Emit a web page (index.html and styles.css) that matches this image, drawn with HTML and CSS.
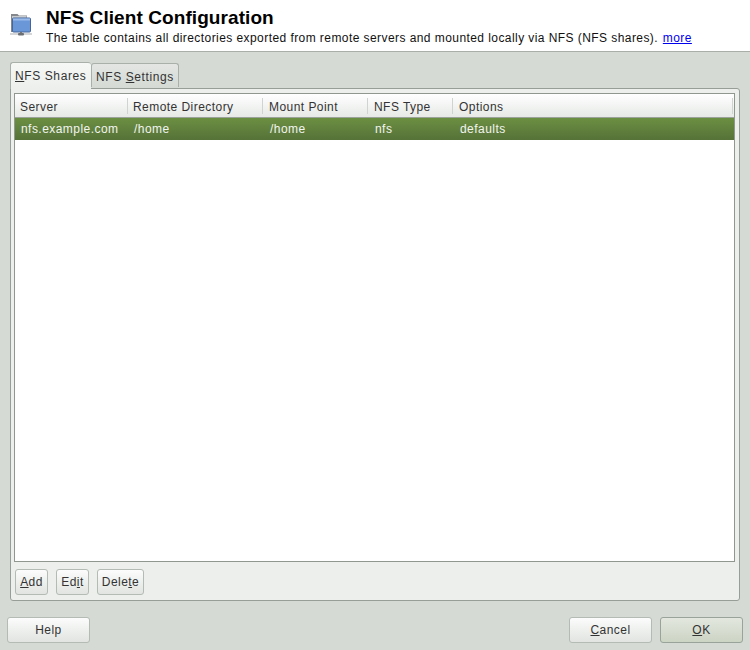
FILE: index.html
```html
<!DOCTYPE html>
<html lang="en">
<head>
<meta charset="utf-8">
<title>NFS Client Configuration</title>
<link rel="stylesheet" href="styles.css">
</head>
<body>
<div class="app">
  <header class="header">
    <svg class="logo" width="22" height="24" viewBox="0 0 22 24">
      <path d="M1 1h6.5l1.5 1.5h8v3.5l-14 13h-2z" fill="#85898e"/>
      <rect x="2" y="3" width="14.5" height="3" fill="#c9cccf"/>
      <rect x="2.5" y="5" width="18" height="14" rx="1" fill="#6a97d8" stroke="#46669a"/>
      <rect x="3" y="5.5" width="17" height="2" fill="#9bbceb"/>
      <rect x="10" y="19" width="2" height="2" fill="#777"/>
      <rect x="0" y="20.5" width="22" height="1" fill="#a9adb0"/>
      <rect x="8" y="20" width="6" height="2.5" rx="1" fill="#6c7074"/>
    </svg>
    <div class="header-text">
      <h1 class="title">NFS Client Configuration</h1>
      <p class="subtitle">The table contains all directories exported from remote servers and mounted locally via NFS (NFS shares). <a class="more" href="#">more</a></p>
    </div>
  </header>
  <main class="main">
    <div class="tabs">
      <div class="tab tab-active"><u>N</u>FS Shares</div>
      <div class="tab"><span>NFS <u>S</u>ettings</span></div>
    </div>
    <section class="panel">
      <div class="table">
        <div class="row thead">
          <div class="th c1">Server</div>
          <div class="th c2">Remote Directory</div>
          <div class="th c3">Mount Point</div>
          <div class="th c4">NFS Type</div>
          <div class="th c5">Options</div>
        </div>
        <div class="row selected">
          <div class="td c1">nfs.example.com</div>
          <div class="td c2">/home</div>
          <div class="td c3">/home</div>
          <div class="td c4">nfs</div>
          <div class="td c5">defaults</div>
        </div>
      </div>
      <div class="panel-actions">
        <button class="btn btn-small"><u>A</u>dd</button>
        <button class="btn btn-small">Ed<u>i</u>t</button>
        <button class="btn btn-small btn-delete">Dele<u>t</u>e</button>
      </div>
    </section>
    <footer class="footer">
      <button class="btn btn-wide">Help</button>
      <div class="footer-right">
        <button class="btn btn-wide"><u>C</u>ancel</button>
        <button class="btn btn-wide btn-primary"><u>O</u>K</button>
      </div>
    </footer>
  </main>
</div>
</body>
</html>
```
FILE: styles.css
```css
* { box-sizing: border-box; }
html, body { margin: 0; padding: 0; }
body {
  width: 750px;
  height: 650px;
  overflow: hidden;
  background: #d5dad5;
  color: #333;
  font-family: "Liberation Sans", Arial, sans-serif;
  font-size: 12px;
  letter-spacing: 0.45px;
}
.app { display: flex; flex-direction: column; height: 650px; }
.header {
  height: 52px;
  background: #fff;
  border-bottom: 1px solid #a9aea9;
  display: flex;
  padding: 13px 0 0 10px;
  gap: 14px;
  flex: none;
}
.logo { flex: none; }
.header-text { margin-top: -6px; }
.title {
  margin: 0;
  color: #000;
  font-size: 19px;
  line-height: 22px;
  font-weight: bold;
  letter-spacing: 0.08px;
}
.subtitle { margin: 2px 0 0; line-height: 14px; color: #111; letter-spacing: 0.43px; }
.more { color: #0000ee; text-decoration: underline; margin-left: 1px; }
.main {
  flex: 1;
  display: flex;
  flex-direction: column;
  padding: 10px 7px 7px 7px;
}
.tabs { display: flex; margin-left: 3px; height: 26px; align-items: flex-end; position: relative; z-index: 1; letter-spacing: 0.6px; }
.tab {
  width: 88px;
  height: 24px;
  margin-bottom: 1px;
  padding: 6px 0 0 4px;
  line-height: 14px;
  white-space: nowrap;
  border: 1px solid #a9b0a9;
  border-bottom: none;
  border-radius: 3px 3px 0 0;
  background: linear-gradient(#e3e6e3, #d5dad5);
}
.tab-active {
  width: 81px;
  height: 27px;
  margin-bottom: -1px;
  padding: 6px 0 0 4px;
  background: linear-gradient(#f6f8f6, #ecefec);
  border-right: none;
}
.panel {
  margin: 0 3px;
  height: 513px;
  display: flex;
  flex-direction: column;
  padding: 4px 4px 4px 3px;
  background: #ecefec;
  border: 1px solid #979e97;
  border-radius: 0 3px 3px 3px;
}
.table {
  height: 469px;
  flex: none;
  background: #fff;
  border: 1px solid #8f978f;
}
.row { display: flex; white-space: nowrap; }
.thead {
  height: 24px;
  padding-top: 1px;
  background: linear-gradient(#fff, #e6e9e6);
  border-bottom: 1px solid #9aa29a;
  align-items: center;
}
.th {
  height: 16px;
  line-height: 18px;
  padding-left: 5px;
  border-right: 1px solid #d0d4d0;
}
.c1 { width: 113px; }
.c2 { width: 135px; }
.c3 { width: 105px; }
.c4 { width: 85px; }
.c5 { flex: 1; margin-right: 1px; }
.th.c3, .th.c4, .th.c5 { padding-left: 6px; }
.td { line-height: 22px; padding-left: 6px; }
.td.c3, .td.c4, .td.c5 { padding-left: 7px; }
.selected {
  height: 22px;
  color: #f2f5ef;
  background: linear-gradient(#6b8f42, #567238);
}
.panel-actions { display: flex; gap: 8px; margin-top: 7px; margin-left: 1px; }
.btn {
  height: 26px;
  padding: 0;
  font: inherit;
  letter-spacing: inherit;
  color: #333;
  border: 1px solid #b4bab4;
  border-radius: 3px;
  background: linear-gradient(#fbfcfb, #e1e4e1);
}
.btn-small { width: 33px; }
.btn-delete { width: 47px; }
.btn-wide { width: 83px; }
.btn-primary {
  border-color: #9aa39a;
  background: linear-gradient(#e3e7df, #ccd4c4);
}
.footer {
  display: flex;
  justify-content: space-between;
  margin-top: 16px;
}
.footer-right { display: flex; gap: 8px; }
```
